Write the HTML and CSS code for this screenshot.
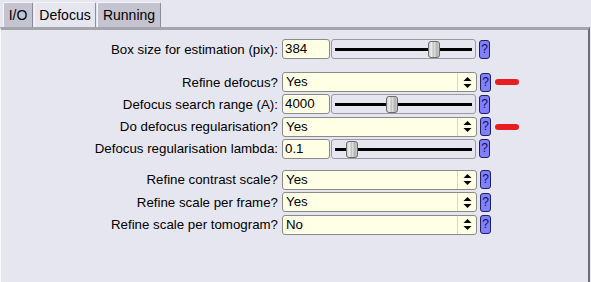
FILE: index.html
```html
<!DOCTYPE html>
<html>
<head>
<meta charset="utf-8">
<link rel="stylesheet" href="styles.css">
</head>
<body>
<div class="window">
  <div class="tabs">
    <div class="tab io">I/O</div>
    <div class="tab active">Defocus</div>
    <div class="tab">Running</div>
  </div>
  <div class="panel">
    <div class="row first">
      <div class="label">Box size for estimation (pix):</div>
      <div class="input">384</div>
      <div class="slider"><div class="track"></div><div class="knob" style="left: 96px"></div></div>
      <div class="help">?</div>
    </div>

    <div class="row gap1">
      <div class="label">Refine defocus?</div>
      <div class="select"><span class="val">Yes</span><span class="arrows"><svg width="9" height="11" viewBox="0 0 9 11"><path d="M4.5 0 L8.5 4 L0.5 4 Z M0.5 7 L8.5 7 L4.5 11 Z" fill="#000"/></svg></span></div>
      <div class="help">?</div>
      <div class="flag"></div>
    </div>
    <div class="row">
      <div class="label">Defocus search range (A):</div>
      <div class="input">4000</div>
      <div class="slider"><div class="track"></div><div class="knob" style="left: 54px"></div></div>
      <div class="help">?</div>
    </div>
    <div class="row">
      <div class="label">Do defocus regularisation?</div>
      <div class="select"><span class="val">Yes</span><span class="arrows"><svg width="9" height="11" viewBox="0 0 9 11"><path d="M4.5 0 L8.5 4 L0.5 4 Z M0.5 7 L8.5 7 L4.5 11 Z" fill="#000"/></svg></span></div>
      <div class="help">?</div>
      <div class="flag"></div>
    </div>
    <div class="row">
      <div class="label">Defocus regularisation lambda:</div>
      <div class="input">0.1</div>
      <div class="slider"><div class="track"></div><div class="knob" style="left: 14px"></div></div>
      <div class="help">?</div>
    </div>

    <div class="row gap2">
      <div class="label">Refine contrast scale?</div>
      <div class="select"><span class="val">Yes</span><span class="arrows"><svg width="9" height="11" viewBox="0 0 9 11"><path d="M4.5 0 L8.5 4 L0.5 4 Z M0.5 7 L8.5 7 L4.5 11 Z" fill="#000"/></svg></span></div>
      <div class="help">?</div>
    </div>
    <div class="row">
      <div class="label">Refine scale per frame?</div>
      <div class="select"><span class="val">Yes</span><span class="arrows"><svg width="9" height="11" viewBox="0 0 9 11"><path d="M4.5 0 L8.5 4 L0.5 4 Z M0.5 7 L8.5 7 L4.5 11 Z" fill="#000"/></svg></span></div>
      <div class="help">?</div>
    </div>
    <div class="row">
      <div class="label">Refine scale per tomogram?</div>
      <div class="select"><span class="val">No</span><span class="arrows"><svg width="9" height="11" viewBox="0 0 9 11"><path d="M4.5 0 L8.5 4 L0.5 4 Z M0.5 7 L8.5 7 L4.5 11 Z" fill="#000"/></svg></span></div>
      <div class="help">?</div>
    </div>
  </div>
</div>
</body>
</html>
```

FILE: styles.css
```css
html, body {
  margin: 0;
  padding: 0;
  background: #e6e6f0;
  font-family: "Liberation Sans", Arial, sans-serif;
  color: #000;
}
.window {
  width: 591px;
  height: 282px;
  display: flex;
  flex-direction: column;
  overflow: hidden;
}
.tabs {
  display: flex;
  padding: 2px 0 0 3px;
  height: 25px;
  gap: 1px;
}
.tab {
  background: #c4c4d0;
  border: 1px solid #f4f4fa;
  border-right-color: #8c8c98;
  border-bottom: none;
  border-radius: 2px 2px 0 0;
  font-size: 14px;
  padding: 4px 0 0 0;
  height: 21px;
  text-align: center;
}
.tab.io { width: 28px; }
.tab:nth-child(2) { width: 60px; }
.tab:nth-child(3) { width: 62px; }
.tab.active {
  background: #e6e6f0;
}
.panel {
  flex: 1;
  border-top: 3px solid #a4a4ac;
  border-right: 2px solid #6e6e78;
  border-left: 1px solid #fafafe;
  margin-right: 1px;
  padding-top: 9px;
}
.row {
  display: flex;
  align-items: center;
  height: 20px;
  margin-bottom: 2.33px;
}
.row.gap1 { margin-top: 13px; }
.row.gap2 { margin-top: 11px; }
.label {
  width: 277px;
  text-align: right;
  font-size: 13.3px;
  padding-right: 4px;
  white-space: nowrap;
}
.input {
  width: 44px;
  height: 18px;
  background: #ffffe6;
  border: 1px solid #8a8a8a;
  border-radius: 3px;
  font-size: 13.3px;
  line-height: 18px;
  padding-left: 2px;
  box-sizing: content-box;
}
.slider {
  position: relative;
  width: 143px;
  height: 18px;
  margin-left: 1px;
  border: 1px solid #9a9aa0;
  border-radius: 3px;
}
.track {
  position: absolute;
  left: 3px;
  right: 3px;
  top: 8px;
  height: 3px;
  background: #000;
}
.knob {
  position: absolute;
  top: 1px;
  width: 10px;
  height: 15px;
  border: 1px solid #6a6a6a;
  border-radius: 3px;
  background: linear-gradient(to right, #d0d0d0, #f0f0f0 30%, #b8b8b8 40%, #e8e8e8 60%, #b0b0b0 70%, #c8c8c8);
}
.select {
  width: 193px;
  height: 18px;
  display: flex;
  background: #ffffe6;
  border: 1px solid #8a8a8a;
  border-radius: 3px;
  font-size: 13.3px;
  line-height: 18px;
}
.select .val {
  flex: 1;
  padding-left: 3px;
}
.select .arrows {
  width: 18px;
  border-left: 1px solid #d8d8c8;
  display: flex;
  align-items: center;
  justify-content: center;
}
.help {
  width: 9px;
  height: 17px;
  margin-left: 3px;
  background: #8080ff;
  border: 1px solid #202060;
  border-radius: 3px;
  color: #101050;
  font-size: 12px;
  line-height: 17px;
  text-align: center;
}
.flag {
  width: 24px;
  height: 6px;
  margin-left: 4px;
  border-radius: 3px;
  background: #e61e1e;
}
```
